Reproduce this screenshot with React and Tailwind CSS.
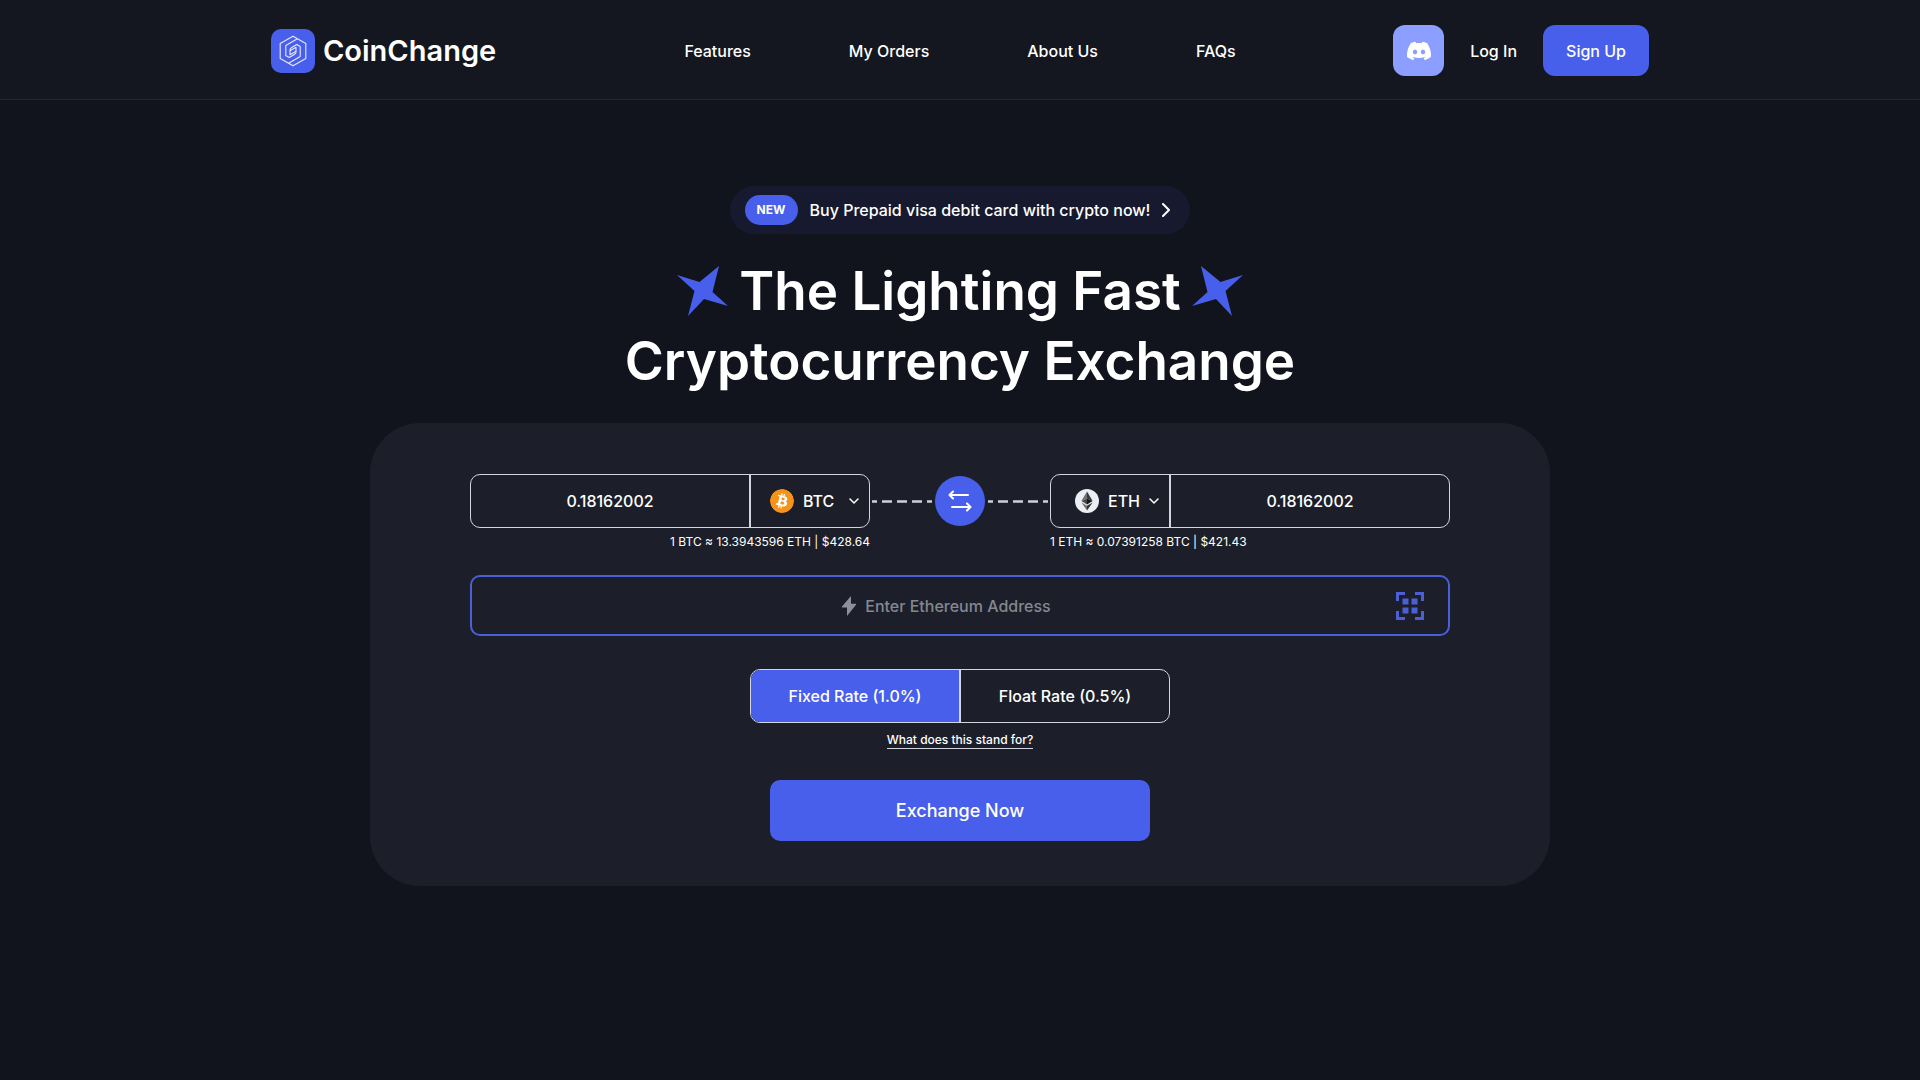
import React, { useState } from 'react';
import { SiBitcoin, SiDiscord } from 'react-icons/si';

const navLinks = ['Features', 'My Orders', 'About Us', 'FAQs'];

function Logo() {
    return (
        <a href="#" className="flex items-center gap-2">
            <span className="flex size-11 items-center justify-center rounded-[10px] bg-[#485fec]">
                <svg width="28" height="32" viewBox="0 0 28 32" fill="none" stroke="#e6eaff" strokeWidth="1.1" strokeLinejoin="round">
                    <path d="M14 1.2 26.8 8.600v14.800L14 30.800 1.200 23.400V8.600Z" />
                    <path d="M18.400 3.700 6.800 10.400V20.500l3.400 2 5.400-3.200Q17 18.500 17 17v-4.700L11 15.800" />
                    <path d="M9.600 28.300 21.200 21.600V11.500l-3.400-2-5.400 3.200Q11 13.500 11 15v4.700L17 16.200" />
                </svg>
            </span>
            <span className="text-[29px] font-semibold leading-none">CoinChange</span>
        </a>
    );
}

function Star({ className }) {
    return (
        <svg width="52" height="50" viewBox="0 0 52 50" className={className} aria-hidden="true">
            <path d="M0 9 22.5 16 42 0 35.5 26 51 40 27 33 11 50 17.5 25Z" fill="#485fec" />
        </svg>
    );
}

function EthIcon() {
    return (
        <svg width="24" height="24" viewBox="0 0 24 24" className="shrink-0" aria-hidden="true">
            <circle cx="12" cy="12" r="12" fill="#eceef5" />
            <path d="M12 2.5 6.4 12.1 12 9.5Z" fill="#707070" />
            <path d="M12 2.5 17.6 12.1 12 9.5Z" fill="#3a3a3a" />
            <path d="M6.4 12.1 12 9.5v6Z" fill="#4a4a4a" />
            <path d="M17.6 12.1 12 9.5v6Z" fill="#161616" />
            <path d="M6.4 13.4 12 16.8v4.7Z" fill="#707070" />
            <path d="M17.6 13.4 12 16.8v4.7Z" fill="#303030" />
        </svg>
    );
}

function ChevronDown() {
    return (
        <svg width="10" height="6" viewBox="0 0 10 6" fill="none" stroke="white" strokeWidth="1.5" strokeLinecap="round" strokeLinejoin="round" className="pointer-events-none ml-auto shrink-0" aria-hidden="true">
            <path d="m1 1 4 4 4-4" />
        </svg>
    );
}

function Dashes() {
    return (
        <svg width="60" height="3" viewBox="0 0 60 3" aria-hidden="true">
            <path d="M0 1.5h60" stroke="#cdd0da" strokeWidth="2.5" strokeDasharray="10 5" strokeDashoffset="5" />
        </svg>
    );
}

function CoinSelect({ label, value, icon, className }) {
    return (
        <label className={`flex w-30 shrink-0 items-center gap-[9px] ${className}`}>
            {icon}
            <select aria-label={label} defaultValue={value} className="appearance-none bg-transparent text-base font-medium outline-none field-sizing-content">
                <option>{value}</option>
            </select>
            <ChevronDown />
        </label>
    );
}

function AmountInput({ label, value, onChange }) {
    return (
        <input
            type="text"
            aria-label={label}
            value={value}
            onChange={(e) => onChange(e.target.value)}
            className="w-full min-w-0 flex-1 bg-transparent text-center text-base font-medium outline-none"
        />
    );
}

function Header() {
    return (
        <header className="border-b border-[#212445] bg-[#14171f]">
            <div className="mx-auto grid h-[99px] max-w-[1378px] grid-cols-[1fr_auto_1fr] items-center pt-0.5">
                <Logo />
                <nav className="flex gap-[98px] text-base font-medium">
                    {navLinks.map((item) => (
                        <a key={item} href="#">{item}</a>
                    ))}
                </nav>
                <div className="flex items-center justify-end gap-[26px] text-base font-medium">
                    <a href="#" aria-label="Discord" className="flex size-[51px] items-center justify-center rounded-xl bg-[#8c9eff]">
                        <SiDiscord size={24} />
                    </a>
                    <a href="#">Log In</a>
                    <button type="button" className="h-[51px] w-[106px] rounded-xl bg-[#485fec]">Sign Up</button>
                </div>
            </div>
        </header>
    );
}

function ExchangeCard() {
    const [sent, setSent] = useState('0.18162002');
    const [received, setReceived] = useState('0.18162002');
    const [rate, setRate] = useState('fixed');

    const boxStyle = "flex h-[54px] rounded-[10px] border border-[#d3d5de]";

    return (
        <form className="mx-auto mt-[27px] flex w-full max-w-[1180px] flex-col items-center rounded-[50px] bg-[#1c1f29] px-[100px] pt-[51px] pb-[45px]" onSubmit={(e) => e.preventDefault()}>
            <div className="flex w-full">
                <div className="flex-1">
                    <div className={boxStyle}>
                        <AmountInput label="You send" value={sent} onChange={setSent} />
                        <CoinSelect
                            label="Currency to send"
                            value="BTC"
                            className="border-l-2 border-[#d3d5de] pl-[19px] pr-[10px]"
                            icon={<SiBitcoin size={24} className="shrink-0 rounded-full bg-[radial-gradient(circle_closest-side,white_80%,transparent_81%)] text-[#f7931a]" />}
                        />
                    </div>
                    <p className="mt-1 text-right text-xs leading-5">1 BTC ≈ 13.3943596 ETH | $428.64</p>
                </div>
                <div className="flex h-[54px] w-[180px] items-center justify-center gap-[3px]">
                    <Dashes />
                    <button type="button" aria-label="Swap currencies" className="flex size-[50px] shrink-0 items-center justify-center rounded-full bg-[#485fec]">
                        <svg width="24" height="22" viewBox="0 0 24 22" fill="none" stroke="white" strokeWidth="2" strokeLinecap="round" strokeLinejoin="round">
                            <path d="M20 5H1.5M5 1.5 1.5 5 5 8.5M4 17h18.5M19 13.5 22.5 17 19 20.5" />
                        </svg>
                    </button>
                    <Dashes />
                </div>
                <div className="flex-1">
                    <div className={boxStyle}>
                        <CoinSelect
                            label="Currency to receive"
                            value="ETH"
                            className="border-r-2 border-[#d3d5de] pl-6 pr-[10px]"
                            icon={<EthIcon />}
                        />
                        <AmountInput label="You receive" value={received} onChange={setReceived} />
                    </div>
                    <p className="mt-1 text-xs leading-5">1 ETH ≈ 0.07391258 BTC | $421.43</p>
                </div>
            </div>

            <div className="mt-[23px] flex h-[61px] w-full items-center rounded-[10px] border-2 border-[#4b5fd6] px-6">
                <label className="flex flex-1 items-center justify-center gap-2">
                    <svg width="16" height="20" viewBox="0 0 16 20" fill="#8e9099" aria-hidden="true">
                        <path d="M10 0 1 10.5a.6.6 0 0 0 .5 1H6V20l9-11.3a.6.6 0 0 0-.5-1H10Z" />
                    </svg>
                    <input type="text" aria-label="Ethereum address" placeholder="Enter Ethereum Address" className="bg-transparent text-base font-medium outline-none field-sizing-content placeholder:text-[#858791]" />
                </label>
                <button type="button" aria-label="Scan QR code">
                    <svg width="28" height="28" viewBox="0 0 28 28" fill="#4b5fd6">
                        <path d="M0 0h9v3H3v6H0zM19 0h9v9h-3V3h-6zM0 19h3v6h6v3H0zM25 19h3v9h-9v-3h6zM6.5 6.5h6v6h-6zM15.500 6.500h6v6h-6zM6.500 15.500h6v6h-6zM15.500 15.500h6v6h-6z" />
                    </svg>
                </button>
            </div>

            <div className="mt-[33px] flex h-[54px] w-[420px] overflow-hidden rounded-[10px] border border-[#d3d5de] text-base font-medium">
                <button type="button" onClick={() => setRate('fixed')} className={`flex-1 border-r border-[#d3d5de] ${rate === 'fixed' ? 'bg-[#485fec]' : ''}`}>
                    Fixed Rate (1.0%)
                </button>
                <button type="button" onClick={() => setRate('float')} className={`flex-1 border-l border-[#d3d5de] ${rate === 'float' ? 'bg-[#485fec]' : ''}`}>
                    Float Rate (0.5%)
                </button>
            </div>
            <a href="#" className="mt-[9px] border-b border-[#d3d5de] text-xs font-medium">What does this stand for?</a>

            <button type="submit" className="mt-[31px] h-[61px] w-[380px] rounded-[10px] bg-[#485fec] text-lg font-medium">
                Exchange Now
            </button>
        </form>
    );
}

export default function App() {
    return (
        <div className="min-h-screen bg-[#11141c] font-['Inter',sans-serif] text-white">
            <Header />
            <main className="pt-[86px]">
                <a href="#" className="mx-auto flex h-12 w-fit items-center gap-3 rounded-full bg-[#171a2e] pl-[15px] pr-5">
                    <span className="flex h-[30px] w-[53px] items-center justify-center rounded-full bg-[#485fec] text-xs font-bold">NEW</span>
                    <span className="text-base font-medium">Buy Prepaid visa debit card with crypto now!</span>
                    <svg width="8" height="14" viewBox="0 0 8 14" fill="none" stroke="white" strokeWidth="2" strokeLinecap="round" strokeLinejoin="round" aria-hidden="true">
                        <path d="m1 1 6 6-6 6" />
                    </svg>
                </a>
                <h1 className="mt-[22px] text-center text-[53px] font-semibold leading-[70px]">
                    <span className="flex items-center justify-center gap-2.5">
                        <Star />
                        The Lighting Fast
                        <Star className="-scale-x-100" />
                    </span>
                    Cryptocurrency Exchange
                </h1>
                <ExchangeCard />
            </main>
        </div>
    );
}
